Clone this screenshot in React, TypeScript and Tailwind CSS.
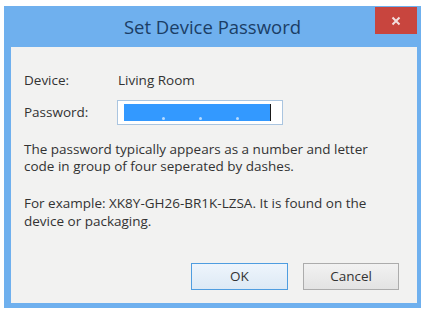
import React from 'react';

const font = { fontFamily: '"Open Sans", "Noto Sans", Arial, sans-serif' };

export default function App() {
  return (
    <div className="h-[315px] w-[426px] bg-white pl-[4px] pt-[6px]" style={font}>
      <div className="flex h-[302px] w-[417px] flex-col bg-[#6fb0ee]">
        {/* title bar */}
        <div className="relative flex h-[41px] shrink-0 items-center justify-center">
          <span className="text-[18.5px] text-[#1b3e66]">Set Device Password</span>
          <div className="absolute right-[4px] top-[1px] flex h-[27px] w-[42px] items-center justify-center bg-[#c8453e]">
            <svg width="10" height="10" viewBox="0 0 10 10">
              <path d="M1.5 1.5 L8.5 8.5 M8.5 1.5 L1.5 8.5" stroke="#f3dede" strokeWidth="2" />
            </svg>
          </div>
        </div>

        {/* client area */}
        <div className="mb-[5px] ml-[7px] mr-[4px] flex flex-1 flex-col bg-[#f2f2f1] pl-[13px] pr-[18px] text-[13.5px] text-[#333]">
          <div className="mt-[25px] flex h-[16px] items-center">
            <span className="w-[94px]">Device:</span>
            <span>Living Room</span>
          </div>

          <div className="mt-[12px] flex items-center">
            <span className="w-[93px]">Password:</span>
            <div className="flex h-[25px] w-[166px] items-center border border-[#aac5e0] bg-white pl-[6px]">
              <div className="relative h-[17px] w-[146px] bg-[#3399ff]">
                <span className="absolute bottom-[1px] left-[38px] h-[3px] w-[3px] rounded-full bg-[#b9dcff]" />
                <span className="absolute bottom-[1px] left-[75px] h-[3px] w-[3px] rounded-full bg-[#b9dcff]" />
                <span className="absolute bottom-[1px] left-[112px] h-[3px] w-[3px] rounded-full bg-[#b9dcff]" />
              </div>
              <div className="h-[17px] w-[1px] bg-[#1a1a1a]" />
            </div>
          </div>

          <p className="mt-[16px] leading-[17px]">
            The password typically appears as a number and letter
            <br />
            code in group of four seperated by dashes.
          </p>

          <p className="mt-[19px] leading-[18px]">
            For example: XK8Y-GH26-BR1K-LZSA. It is found on the
            <br />
            device or packaging.
          </p>

          <div className="mt-auto mb-[13px] flex justify-end gap-[15px]">
            <div className="flex h-[27px] w-[97px] items-center justify-center border border-[#4f9de0] bg-gradient-to-b from-[#eef5fc] to-[#dde9f5]">
              OK
            </div>
            <div className="flex h-[27px] w-[96px] items-center justify-center border border-[#acacac] bg-gradient-to-b from-[#f2f2f2] to-[#e3e3e3]">
              Cancel
            </div>
          </div>
        </div>
      </div>
    </div>
  );
}
